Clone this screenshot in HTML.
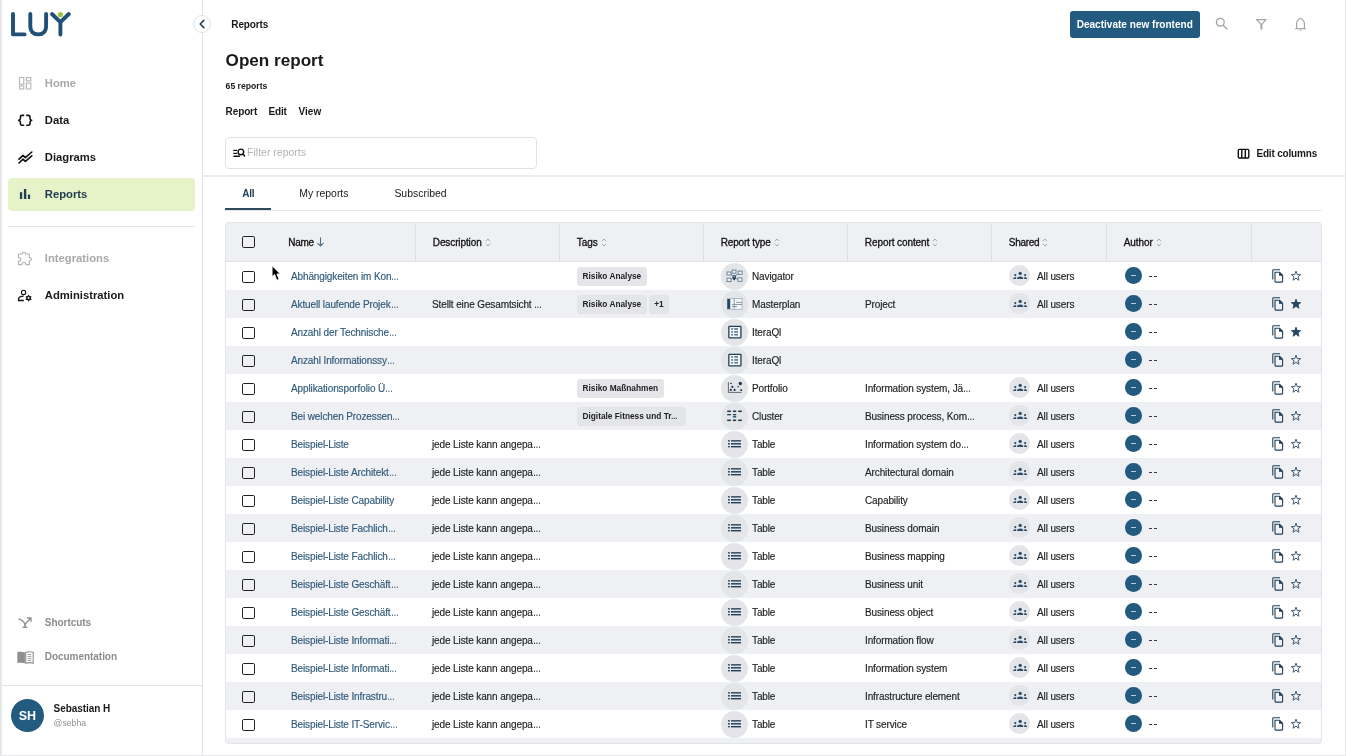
<!DOCTYPE html>
<html><head><meta charset="utf-8">
<style>
*{box-sizing:border-box;margin:0;padding:0}
html,body{width:1346px;height:756px;overflow:hidden;background:#fff;font-family:"Liberation Sans",sans-serif;color:#1a1a1a}
.abs{position:absolute}
#lb{position:absolute;left:0;top:0;width:2px;height:756px;background:#e6e7eb}
#rb{position:absolute;left:1345px;top:0;width:1px;height:756px;background:#e6e7eb}
#bb{position:absolute;left:0;top:755px;width:1346px;height:1px;background:#e6e7eb}
#side{position:absolute;left:2px;top:0;width:201px;height:755px;border-right:1px solid #e3e4e9}
.nav{position:absolute;left:43px;font-weight:bold;font-size:11.25px;line-height:14px;white-space:nowrap}
.nav.gray{color:#a9a9a9}
.navi{position:absolute}
#active{position:absolute;left:6px;top:178px;width:187px;height:33px;background:#e6f2c7;border-radius:4px}
.hr{position:absolute;height:1px;background:#e3e4e9}
.t{position:absolute;top:0.6px;height:28px;line-height:28px;font-size:10px;letter-spacing:-0.12px;white-space:nowrap;color:#222;-webkit-text-stroke-width:0.15px}
.el{display:inline-block;transform:scaleX(.78);transform-origin:0 50%}
.link{color:#2f5a7a}
.row{position:absolute;left:0;width:1097px;height:28px}
.cb{position:absolute;width:12.5px;height:12.2px;border:1.7px solid #222;border-radius:1.8px}
.tags{position:absolute;left:351.5px;top:4.8px;display:flex;gap:2px}
.tag{height:19px;line-height:19px;padding:0 6px;background:#e4e5e8;border-radius:3px;font-size:8.3px;font-weight:bold;color:#222;white-space:nowrap}
.ic{position:absolute;top:0.5px;width:27px;height:27px;border-radius:50%;background:#e3e5e9}
.ic svg{position:absolute;left:4.5px;top:5.5px}
.ics{position:absolute;top:2.8px;width:21.5px;height:21.5px;border-radius:50%;background:#e3e5e9}
.ics svg{display:block}
.dsh{position:absolute;top:13.6px;width:3px;height:1.4px;background:#3a3a3a}
.av{position:absolute;top:5.2px;width:16.6px;height:16.6px;border-radius:50%;background:#225a80}
.av i{position:absolute;left:5.8px;top:7.6px;width:5px;height:1.4px;background:#b9cbd8}
.dash{letter-spacing:0.5px;color:#333}
.copy{position:absolute;top:7px;width:12px;height:14px}
.copy svg,.star svg{display:block}
.star{position:absolute;top:8px}
.hd{position:absolute;top:15px;font-size:10px;white-space:nowrap;line-height:12px;color:#111;-webkit-text-stroke:0.3px #111}
.hd svg{vertical-align:-1px;margin-left:3px}
.colb{position:absolute;top:0;width:1px;height:40px;background:#dfe1e5}
</style></head><body>
<div id="wrap" style="position:absolute;left:0;top:0;width:1346px;height:756px;will-change:transform;overflow:hidden">
<div id="lb"></div><div id="rb"></div><div id="bb"></div>

<!-- SIDEBAR -->
<div id="side">
  <svg class="abs" style="left:9px;top:11px" width="62" height="27" viewBox="0 0 62 27">
    <g fill="none" stroke="#1f5178" stroke-width="3.9" stroke-linecap="round" stroke-linejoin="round">
      <path d="M2 2.9V23.4H13.6"/>
      <path d="M19.3 2.9V15C19.3 20.5 22.5 23.4 27.2 23.4C31.9 23.4 35.1 20.5 35.1 15V2.9"/>
      <path d="M41 3L49.4 11.2L57.8 3M49.4 11.2V23.5"/>
    </g>
    <circle cx="49.4" cy="3.6" r="2.6" fill="#9ac43c"/>
  </svg>
  <div id="active"></div>
<svg class="abs" style="left:14.6px;top:76px" width="15" height="15" viewBox="0 0 15 15" fill="none" stroke="#b8b8b8" stroke-width="1.15"><rect x="2.5" y="1.5" width="4.3" height="6.8"/><rect x="9.4" y="1.5" width="4.4" height="3.3"/><rect x="2.5" y="10" width="4.3" height="3"/><rect x="9.4" y="7" width="4.4" height="6"/></svg>
<div class="nav gray" style="left:42.8px;top:76.30px;font-size:11.25px;line-height:14px">Home</div>
<svg class="abs" style="left:16px;top:114px" width="15" height="13" viewBox="0 0 15 13" fill="none" stroke="#111" stroke-width="1.6" stroke-linecap="round" stroke-linejoin="round"><path d="M5.6 1.4H4C3 1.4 2.4 1.9 2.4 2.9V4.4C2.4 5.3 1.6 6 0.7 6.3C1.6 6.6 2.4 7.3 2.4 8.2V9.8C2.4 10.8 3 11.3 4 11.3H5.6"/><path d="M8.8 1.4H10.4C11.4 1.4 12 1.9 12 2.9V4.4C12 5.3 12.8 6 13.7 6.3C12.8 6.6 12 7.3 12 8.2V9.8C12 10.8 11.4 11.3 10.4 11.3H8.8"/></svg>
<div class="nav" style="left:42.8px;top:112.90px;font-size:11.25px;line-height:14px">Data</div>
<svg class="abs" style="left:15.5px;top:150.5px" width="15" height="13" viewBox="0 0 15 13" fill="none" stroke="#111" stroke-width="1.6" stroke-linecap="round" stroke-linejoin="round"><path d="M1 8.2L5 4.4L7.4 6.6L13.8 1"/><path d="M1 12L5 8.2L7.4 10.4L13.8 4.8"/></svg>
<div class="nav" style="left:42.8px;top:150.10px;font-size:11.25px;line-height:14px">Diagrams</div>
<svg class="abs" style="left:15px;top:188px" width="15" height="12" viewBox="0 0 15 12" fill="#203f57"><rect x="2.9" y="4.2" width="2.3" height="6.8"/><rect x="6.9" y="1" width="2.4" height="10"/><rect x="10.9" y="6.6" width="2.2" height="4.4"/></svg>
<div class="nav" style="left:42.8px;top:187.10px;font-size:11.25px;line-height:14px;color:#1f3b52">Reports</div>
<div class="hr" style="left:6px;top:226px;width:187px"></div>
<svg class="abs" style="left:14px;top:250px" width="17" height="17" viewBox="0 0 17 17" fill="none" stroke="#b4b4b4" stroke-width="1.1" stroke-linejoin="round"><path d="M2.5 4H6.3C6.2 2.9 6.8 2.2 7.9 2.2C9 2.2 9.6 2.9 9.5 4H13.4V7.6C14.5 7.5 15.4 8.2 15.4 9.2C15.4 10.2 14.5 10.9 13.4 10.8V14.6H9.8C9.9 13.4 9.1 12.2 7.9 12.2C6.7 12.2 5.9 13.4 6 14.6H2.5V11.2C3.9 11.3 4.9 10.6 4.9 9.4C4.9 8.2 3.9 7.5 2.5 7.6Z"/></svg>
<div class="nav gray" style="left:42.8px;top:251.40px;font-size:11.25px;line-height:14px">Integrations</div>
<svg class="abs" style="left:13px;top:286px" width="20" height="18" viewBox="0 0 20 18" fill="none" stroke="#111"><circle cx="8.57" cy="6.4" r="2.15" stroke-width="1.15"/><path d="M8.6 10.2C6 10.3 4 11 3.6 12.6V14.5H8.8" stroke-width="1.35"/><polygon points="13.57,8.55 14.70,10.15 16.64,10.32 15.82,12.10 16.64,13.88 14.70,14.05 13.57,15.65 12.45,14.05 10.50,13.88 11.32,12.10 10.50,10.32 12.45,10.15" fill="#111" stroke="none"/><circle cx="13.57" cy="12.1" r="1" fill="#fff" stroke="none"/></svg>
<div class="nav" style="left:42.8px;top:288.20px;font-size:11.25px;line-height:14px">Administration</div>
<svg class="abs" style="left:15.5px;top:617px" width="15" height="12" viewBox="0 0 15 12" fill="none" stroke="#8f8f8f" stroke-width="1.3" stroke-linecap="round"><path d="M1 2.2C3.5 2.4 5.5 4.4 7 7.2"/><path d="M7 7.2L13 1M9.6 1H13V4.4"/><path d="M7 7.4V9.9M5.2 10.2H8.8" stroke-width="1.5"/></svg>
<div class="nav gray" style="left:42.8px;top:615.53px;font-size:10px;line-height:14px;letter-spacing:-0.04px;color:#8c8c8c">Shortcuts</div>
<svg class="abs" style="left:15px;top:650.5px" width="17" height="13" viewBox="0 0 17 13"><path d="M0.3 1.3C2.8 0.6 5.4 0.7 7.9 1.5V12.3C5.4 11.5 2.8 11.4 0.3 12.1Z" fill="#8f8f8f"/><path d="M8.7 1.5C11.2 0.7 13.8 0.6 16.2 1.3V12.1C13.8 11.4 11.2 11.5 8.7 12.3Z" fill="none" stroke="#8f8f8f" stroke-width="1.1"/><path d="M10.6 3.6H14.4M10.6 5.6H14.4M10.6 7.6H14.4M10.6 9.6H14.4" stroke="#8f8f8f" stroke-width="0.85"/></svg>
<div class="nav gray" style="left:42.8px;top:649.93px;font-size:10px;line-height:14px;letter-spacing:-0.045px;color:#8c8c8c">Documentation</div>
<div class="hr" style="left:0;top:685px;width:201px"></div>
<div class="abs" style="left:8.8px;top:699px;width:33.2px;height:33.2px;border-radius:50%;background:#225a80;color:#fff;font-weight:bold;font-size:12.5px;line-height:35.2px;text-align:center;letter-spacing:0px">SH</div>
<div class="nav" style="left:51.6px;top:702.93px;font-size:10px;line-height:12px;letter-spacing:-0.06px;color:#1a1a1a">Sebastian H</div>
<div class="abs" style="left:51.6px;top:717.2px;font-size:8.7px;line-height:12px;color:#8e8e8e;white-space:nowrap">@sebha</div>
</div>

<div class="abs" style="left:193px;top:15px;width:18.4px;height:18.4px;border-radius:50%;background:#fff;border:1px solid #dfe1e5"></div>
<svg class="abs" style="left:198px;top:19px" width="8" height="10" viewBox="0 0 8 10" fill="none" stroke="#1d3a50" stroke-width="1.5" stroke-linecap="round" stroke-linejoin="round"><path d="M5.8 1.4L2.2 5L5.8 8.6"/></svg>
<div class="abs" style="left:231.3px;top:18.34px;font-size:10px;line-height:14px;font-weight:bold;color:#1a1a1a;white-space:nowrap;letter-spacing:-0.14px;">Reports</div>
<div class="abs" style="left:1070px;top:10.5px;width:129.5px;height:27.7px;border-radius:3px;background:#225a80;color:#fff;font-weight:bold;font-size:10.05px;line-height:27.7px;text-align:center;white-space:nowrap">Deactivate new frontend</div>
<svg class="abs" style="left:1214px;top:17px" width="15" height="14" viewBox="0 0 15 14" fill="none" stroke="#a3a3a3" stroke-width="1.3" stroke-linecap="round"><circle cx="6.3" cy="5.3" r="3.9"/><path d="M9.2 8.2L13 12"/></svg>
<svg class="abs" style="left:1255px;top:18px" width="13" height="13" viewBox="0 0 13 13" fill="none" stroke="#a3a3a3" stroke-width="1.2" stroke-linejoin="round"><path d="M1.6 1.6H11.2L6.4 6.6Z"/><path d="M6.4 6.2V11.6" stroke-width="1.9"/></svg>
<svg class="abs" style="left:1294px;top:17px" width="13" height="15" viewBox="0 0 13 15" fill="none" stroke="#a3a3a3" stroke-width="1.2" stroke-linejoin="round"><path d="M6.5 1.3C4 2.6 2.6 4.2 2.6 7V11.6M6.5 1.3C9 2.6 10.4 4.2 10.4 7V11.6"/><path d="M1.2 11.7H11.8"/><path d="M5.6 13.3H7.4" stroke-width="0.9"/></svg>
<div class="abs" style="left:225.6px;top:50.87px;font-size:17.1px;line-height:20px;font-weight:bold;color:#1a1a1a;white-space:nowrap;">Open report</div>
<div class="abs" style="left:225.6px;top:80.00px;font-size:8.65px;line-height:12px;font-weight:bold;color:#1a1a1a;white-space:nowrap;">65 reports</div>
<div class="abs" style="left:225.6px;top:104.53px;font-size:10px;line-height:14px;font-weight:bold;color:#1a1a1a;white-space:nowrap;letter-spacing:-0.12px;">Report</div>
<div class="abs" style="left:268.6px;top:104.53px;font-size:10px;line-height:14px;font-weight:bold;color:#1a1a1a;white-space:nowrap;letter-spacing:-0.2px;">Edit</div>
<div class="abs" style="left:298.4px;top:104.53px;font-size:10px;line-height:14px;font-weight:bold;color:#1a1a1a;white-space:nowrap;letter-spacing:0.1px;">View</div>
<div class="abs" style="left:225px;top:137px;width:312px;height:31.5px;border:1px solid #dfe2e6;border-radius:4px;background:#fff"></div>
<svg class="abs" style="left:232px;top:147px" width="14" height="11" viewBox="0 0 14 11" fill="none" stroke="#111" stroke-width="1.4" stroke-linecap="round"><path d="M1.9 3.4H4.6M1.9 6.4H4.6M1.9 9.2H7.5"/><circle cx="8.9" cy="4.9" r="2.8"/><path d="M11 7L12.6 9"/></svg>
<div class="abs" style="left:247.1px;top:145.36px;font-size:10.5px;line-height:14px;color:#b3b3b3;white-space:nowrap;">Filter reports</div>
<svg class="abs" style="left:1237px;top:147.5px" width="13" height="11" viewBox="0 0 13 11" fill="none" stroke="#111" stroke-width="1.4"><rect x="1.3" y="1.4" width="10.5" height="8.6" rx="1"/><path d="M4.8 1.4V10M8.3 1.4V10"/></svg>
<div class="abs" style="left:1256.4px;top:146.53px;font-size:10px;line-height:14px;font-weight:bold;color:#1a1a1a;white-space:nowrap;letter-spacing:-0.18px;">Edit columns</div>
<div class="hr" style="left:203px;top:175px;width:1142px;height:2px;background:#ebecef"></div>
<div class="abs" style="left:242.2px;top:186.53px;font-size:10px;line-height:14px;font-weight:bold;color:#22405a;white-space:nowrap;letter-spacing:-0.19px;">All</div>
<div class="abs" style="left:299.2px;top:187.08px;font-size:10.45px;line-height:14px;color:#1a1a1a;white-space:nowrap;">My reports</div>
<div class="abs" style="left:394.4px;top:187.08px;font-size:10.45px;line-height:14px;color:#1a1a1a;white-space:nowrap;">Subscribed</div>
<div class="hr" style="left:225px;top:210px;width:1097px;background:#e6e7eb"></div>
<div class="abs" style="left:225px;top:208px;width:46px;height:2px;background:#2d4a61"></div>

<!-- TABLE -->
<div id="table" style="position:absolute;left:225px;top:222px;width:1097px;height:522px;border-radius:4px;overflow:hidden;background:#fff">
  <div style="position:absolute;left:0;top:0;width:1097px;height:40px;background:#eef0f4;border-bottom:1px solid #dfe1e5"></div>
  <div class="cb" style="left:17.4px;top:13.7px"></div>
<div class="hd" style="left:63.3px;top:14.54px;letter-spacing:-0.29px"><span>Name</span><svg width="7" height="10" viewBox="0 0 7 10" fill="none" stroke="#4a6c86" stroke-width="1.1" stroke-linecap="round"><path d="M3.5 0.8V9M0.8 6.3L3.5 9L6.2 6.3"/></svg></div>
<div class="hd" style="left:207.8px;top:14.54px;letter-spacing:-0.11px"><span>Description</span><svg width="6" height="9" viewBox="0 0 6 9" fill="none" stroke="#9aa0a8" stroke-width="0.9"><path d="M1 3.2 L3 1 L5 3.2 M1 5.8 L3 8 L5 5.8"/></svg></div>
<div class="hd" style="left:351.8px;top:14.54px;letter-spacing:-0.03px"><span>Tags</span><svg width="6" height="9" viewBox="0 0 6 9" fill="none" stroke="#9aa0a8" stroke-width="0.9"><path d="M1 3.2 L3 1 L5 3.2 M1 5.8 L3 8 L5 5.8"/></svg></div>
<div class="hd" style="left:495.7px;top:14.54px;letter-spacing:-0.16px"><span>Report type</span><svg width="6" height="9" viewBox="0 0 6 9" fill="none" stroke="#9aa0a8" stroke-width="0.9"><path d="M1 3.2 L3 1 L5 3.2 M1 5.8 L3 8 L5 5.8"/></svg></div>
<div class="hd" style="left:639.8px;top:14.54px;letter-spacing:-0.08px"><span>Report content</span><svg width="6" height="9" viewBox="0 0 6 9" fill="none" stroke="#9aa0a8" stroke-width="0.9"><path d="M1 3.2 L3 1 L5 3.2 M1 5.8 L3 8 L5 5.8"/></svg></div>
<div class="hd" style="left:783.8px;top:14.54px;letter-spacing:-0.3px"><span>Shared</span><svg width="6" height="9" viewBox="0 0 6 9" fill="none" stroke="#9aa0a8" stroke-width="0.9"><path d="M1 3.2 L3 1 L5 3.2 M1 5.8 L3 8 L5 5.8"/></svg></div>
<div class="hd" style="left:898.7px;top:14.54px;letter-spacing:-0.04px"><span>Author</span><svg width="6" height="9" viewBox="0 0 6 9" fill="none" stroke="#9aa0a8" stroke-width="0.9"><path d="M1 3.2 L3 1 L5 3.2 M1 5.8 L3 8 L5 5.8"/></svg></div>
<div class="colb" style="left:190.0px"></div>
<div class="colb" style="left:334.0px"></div>
<div class="colb" style="left:478.0px"></div>
<div class="colb" style="left:622.0px"></div>
<div class="colb" style="left:766.0px"></div>
<div class="colb" style="left:881.0px"></div>
<div class="colb" style="left:1026.0px"></div>
  <div class="row" style="top:40px;background:#ffffff"><div class="cb" style="left:17.4px;top:8.7px"></div><div class="t link" style="left:66px">Abhängigkeiten im Kon<span class="el">…</span></div><div class="tags"><div class="tag">Risiko Analyse</div></div><div class="ic" style="left:495.5px"><svg width="18" height="16" viewBox="0 0 18 16" fill="#f3f6f9" stroke="#5f7b90" stroke-width="0.9"><path d="M6 6.4L7.6 7.6M13.2 6.1L10.6 7.6M6 11.6L7.6 10.4M13 11.3L10.6 10.4" fill="none"/><rect x="7.1" y="2.1" width="3.9" height="3.1" rx="0"/><rect x="2" y="4" width="4" height="3" rx="0"/><rect x="13.2" y="3.1" width="3.9" height="3.2" rx="0"/><rect x="2" y="10.2" width="4" height="3.4" rx="0"/><rect x="13" y="9.9" width="4" height="3.4" rx="0"/><path d="M9.2 12.6C7.8 10.9 7.3 10 7.3 8.9A1.9 1.9 0 0 1 11.1 8.9C11.1 10 10.6 10.9 9.2 12.6Z" fill="#22425a" stroke="none"/><circle cx="9.2" cy="8.8" r="0.7" fill="#dfe6ec" stroke="none"/></svg></div><div class="t" style="left:527px">Navigator</div><div class="ics" style="left:783.8px"><div style="position:absolute;left:4.2px;top:6.2px;width:15px;height:9px"><svg width="15" height="9" viewBox="0 0 15 9" fill="#2b4e6a"><circle cx="7.2" cy="2.4" r="1.65"/><path d="M4 7.9C4.1 6.2 5.3 5.4 7.2 5.4C9.1 5.4 10.3 6.2 10.4 7.9Z"/><circle cx="2.3" cy="4.1" r="1.1"/><path d="M0.2 7.9C0.3 6.8 1 6.3 2.3 6.3C2.8 6.3 3.2 6.4 3.5 6.6C3.2 7 3.1 7.4 3.1 7.9Z"/><circle cx="12.1" cy="4.1" r="1.1"/><path d="M14.2 7.9C14.1 6.8 13.4 6.3 12.1 6.3C11.6 6.3 11.2 6.4 10.9 6.6C11.2 7 11.3 7.4 11.3 7.9Z"/></svg></div></div><div class="t" style="left:812px">All users</div><div class="av" style="left:900px"><i></i></div><div class="dsh" style="left:924px"></div><div class="dsh" style="left:929px"></div><div class="copy" style="left:1047px"><svg width="12" height="14" viewBox="0 0 12 14" fill="none" stroke="#22405a" stroke-width="1.1"><path d="M0.8 10.5V1.3C0.8 1 1 0.8 1.3 0.8H8"/><path d="M3 3.2H7.6L10.6 6.2V12.6C10.6 12.9 10.4 13.1 10.1 13.1H3.5C3.2 13.1 3 12.9 3 12.6Z"/><path d="M7.6 3.2V6.2H10.6" fill="#22405a"/></svg></div><div class="star" style="left:1065px"><svg width="12" height="12" viewBox="0 0 24 24" fill="none" stroke="#22405a" stroke-width="1.7" stroke-linejoin="miter"><path d="M12 2.4 L14.5 9.1 L21.4 9.3 L16 13.6 L17.9 20.5 L12 16.5 L6.1 20.5 L8 13.6 L2.6 9.3 L9.5 9.1 Z"/></svg></div></div>
<div class="row" style="top:68px;background:#eef0f4"><div class="cb" style="left:17.4px;top:8.7px"></div><div class="t link" style="left:66px">Aktuell laufende Projek<span class="el">…</span></div><div class="t" style="left:207px">Stellt eine Gesamtsicht <span class="el">…</span></div><div class="tags"><div class="tag">Risiko Analyse</div><div class="tag" style="padding:0 5px">+1</div></div><div class="ic" style="left:495.5px"><svg width="18" height="16" viewBox="0 0 18 16"><rect x="2.4" y="2.4" width="14.6" height="10.9" fill="#f4f7fa" stroke="#a3b0ba" stroke-width="0.8"/><rect x="2.3" y="3" width="2.9" height="9.9" fill="#1d4764"/><g stroke="#7f93a3" stroke-width="0.9"><path d="M9.2 2.8V13.2M11 6.4H17M7 8.5H17M7 10.5H12"/></g></svg></div><div class="t" style="left:527px">Masterplan</div><div class="t" style="left:640px">Project</div><div class="ics" style="left:783.8px"><div style="position:absolute;left:4.2px;top:6.2px;width:15px;height:9px"><svg width="15" height="9" viewBox="0 0 15 9" fill="#2b4e6a"><circle cx="7.2" cy="2.4" r="1.65"/><path d="M4 7.9C4.1 6.2 5.3 5.4 7.2 5.4C9.1 5.4 10.3 6.2 10.4 7.9Z"/><circle cx="2.3" cy="4.1" r="1.1"/><path d="M0.2 7.9C0.3 6.8 1 6.3 2.3 6.3C2.8 6.3 3.2 6.4 3.5 6.6C3.2 7 3.1 7.4 3.1 7.9Z"/><circle cx="12.1" cy="4.1" r="1.1"/><path d="M14.2 7.9C14.1 6.8 13.4 6.3 12.1 6.3C11.6 6.3 11.2 6.4 10.9 6.6C11.2 7 11.3 7.4 11.3 7.9Z"/></svg></div></div><div class="t" style="left:812px">All users</div><div class="av" style="left:900px"><i></i></div><div class="dsh" style="left:924px"></div><div class="dsh" style="left:929px"></div><div class="copy" style="left:1047px"><svg width="12" height="14" viewBox="0 0 12 14" fill="none" stroke="#22405a" stroke-width="1.1"><path d="M0.8 10.5V1.3C0.8 1 1 0.8 1.3 0.8H8"/><path d="M3 3.2H7.6L10.6 6.2V12.6C10.6 12.9 10.4 13.1 10.1 13.1H3.5C3.2 13.1 3 12.9 3 12.6Z"/><path d="M7.6 3.2V6.2H10.6" fill="#22405a"/></svg></div><div class="star" style="left:1065px"><svg width="12" height="12" viewBox="0 0 24 24" fill="#1f4a6a" stroke="#22405a" stroke-width="1.7" stroke-linejoin="miter"><path d="M12 2.4 L14.5 9.1 L21.4 9.3 L16 13.6 L17.9 20.5 L12 16.5 L6.1 20.5 L8 13.6 L2.6 9.3 L9.5 9.1 Z"/></svg></div></div>
<div class="row" style="top:96px;background:#ffffff"><div class="cb" style="left:17.4px;top:8.7px"></div><div class="t link" style="left:66px">Anzahl der Technische<span class="el">…</span></div><div class="ic" style="left:495.5px"><svg width="18" height="16" viewBox="0 0 18 16"><rect x="3.85" y="2.45" width="12.1" height="11.5" rx="0.6" fill="#f5f8fb" stroke="#213f56" stroke-width="1.3"/><g fill="#34556d"><rect x="6.2" y="4.3" width="1.8" height="1.3"/><rect x="9.2" y="4.3" width="3.8" height="1.3"/><rect x="6.2" y="7.3" width="1.8" height="1.3"/><rect x="9.2" y="7.3" width="3.8" height="1.3"/><rect x="6.2" y="10.2" width="1.8" height="1.2"/><rect x="9.2" y="10.2" width="3.8" height="1.2"/></g></svg></div><div class="t" style="left:527px">IteraQl</div><div class="av" style="left:900px"><i></i></div><div class="dsh" style="left:924px"></div><div class="dsh" style="left:929px"></div><div class="copy" style="left:1047px"><svg width="12" height="14" viewBox="0 0 12 14" fill="none" stroke="#22405a" stroke-width="1.1"><path d="M0.8 10.5V1.3C0.8 1 1 0.8 1.3 0.8H8"/><path d="M3 3.2H7.6L10.6 6.2V12.6C10.6 12.9 10.4 13.1 10.1 13.1H3.5C3.2 13.1 3 12.9 3 12.6Z"/><path d="M7.6 3.2V6.2H10.6" fill="#22405a"/></svg></div><div class="star" style="left:1065px"><svg width="12" height="12" viewBox="0 0 24 24" fill="#1f4a6a" stroke="#22405a" stroke-width="1.7" stroke-linejoin="miter"><path d="M12 2.4 L14.5 9.1 L21.4 9.3 L16 13.6 L17.9 20.5 L12 16.5 L6.1 20.5 L8 13.6 L2.6 9.3 L9.5 9.1 Z"/></svg></div></div>
<div class="row" style="top:124px;background:#eef0f4"><div class="cb" style="left:17.4px;top:8.7px"></div><div class="t link" style="left:66px">Anzahl Informationssy<span class="el">…</span></div><div class="ic" style="left:495.5px"><svg width="18" height="16" viewBox="0 0 18 16"><rect x="3.85" y="2.45" width="12.1" height="11.5" rx="0.6" fill="#f5f8fb" stroke="#213f56" stroke-width="1.3"/><g fill="#34556d"><rect x="6.2" y="4.3" width="1.8" height="1.3"/><rect x="9.2" y="4.3" width="3.8" height="1.3"/><rect x="6.2" y="7.3" width="1.8" height="1.3"/><rect x="9.2" y="7.3" width="3.8" height="1.3"/><rect x="6.2" y="10.2" width="1.8" height="1.2"/><rect x="9.2" y="10.2" width="3.8" height="1.2"/></g></svg></div><div class="t" style="left:527px">IteraQl</div><div class="av" style="left:900px"><i></i></div><div class="dsh" style="left:924px"></div><div class="dsh" style="left:929px"></div><div class="copy" style="left:1047px"><svg width="12" height="14" viewBox="0 0 12 14" fill="none" stroke="#22405a" stroke-width="1.1"><path d="M0.8 10.5V1.3C0.8 1 1 0.8 1.3 0.8H8"/><path d="M3 3.2H7.6L10.6 6.2V12.6C10.6 12.9 10.4 13.1 10.1 13.1H3.5C3.2 13.1 3 12.9 3 12.6Z"/><path d="M7.6 3.2V6.2H10.6" fill="#22405a"/></svg></div><div class="star" style="left:1065px"><svg width="12" height="12" viewBox="0 0 24 24" fill="none" stroke="#22405a" stroke-width="1.7" stroke-linejoin="miter"><path d="M12 2.4 L14.5 9.1 L21.4 9.3 L16 13.6 L17.9 20.5 L12 16.5 L6.1 20.5 L8 13.6 L2.6 9.3 L9.5 9.1 Z"/></svg></div></div>
<div class="row" style="top:152px;background:#ffffff"><div class="cb" style="left:17.4px;top:8.7px"></div><div class="t link" style="left:66px">Applikationsporfolio Ü<span class="el">…</span></div><div class="tags"><div class="tag">Risiko Maßnahmen</div></div><div class="ic" style="left:495.5px"><svg width="18" height="16" viewBox="0 0 18 16" fill="#1b3142"><path d="M3.4 2.1V12.4H16.6" fill="none" stroke="#50606c" stroke-width="0.9"/><rect x="5" y="2.9" width="2" height="0.9"/><circle cx="7.4" cy="6.9" r="1.05"/><circle cx="5.8" cy="9.9" r="1.05"/><circle cx="9.6" cy="9.9" r="1.05"/><circle cx="13.2" cy="6.7" r="0.8"/><circle cx="15.3" cy="3.5" r="1.65"/><rect x="15.3" y="9.2" width="1.8" height="1.8" rx="0.4"/></svg></div><div class="t" style="left:527px">Portfolio</div><div class="t" style="left:640px">Information system, Jä<span class="el">…</span></div><div class="ics" style="left:783.8px"><div style="position:absolute;left:4.2px;top:6.2px;width:15px;height:9px"><svg width="15" height="9" viewBox="0 0 15 9" fill="#2b4e6a"><circle cx="7.2" cy="2.4" r="1.65"/><path d="M4 7.9C4.1 6.2 5.3 5.4 7.2 5.4C9.1 5.4 10.3 6.2 10.4 7.9Z"/><circle cx="2.3" cy="4.1" r="1.1"/><path d="M0.2 7.9C0.3 6.8 1 6.3 2.3 6.3C2.8 6.3 3.2 6.4 3.5 6.6C3.2 7 3.1 7.4 3.1 7.9Z"/><circle cx="12.1" cy="4.1" r="1.1"/><path d="M14.2 7.9C14.1 6.8 13.4 6.3 12.1 6.3C11.6 6.3 11.2 6.4 10.9 6.6C11.2 7 11.3 7.4 11.3 7.9Z"/></svg></div></div><div class="t" style="left:812px">All users</div><div class="av" style="left:900px"><i></i></div><div class="dsh" style="left:924px"></div><div class="dsh" style="left:929px"></div><div class="copy" style="left:1047px"><svg width="12" height="14" viewBox="0 0 12 14" fill="none" stroke="#22405a" stroke-width="1.1"><path d="M0.8 10.5V1.3C0.8 1 1 0.8 1.3 0.8H8"/><path d="M3 3.2H7.6L10.6 6.2V12.6C10.6 12.9 10.4 13.1 10.1 13.1H3.5C3.2 13.1 3 12.9 3 12.6Z"/><path d="M7.6 3.2V6.2H10.6" fill="#22405a"/></svg></div><div class="star" style="left:1065px"><svg width="12" height="12" viewBox="0 0 24 24" fill="none" stroke="#22405a" stroke-width="1.7" stroke-linejoin="miter"><path d="M12 2.4 L14.5 9.1 L21.4 9.3 L16 13.6 L17.9 20.5 L12 16.5 L6.1 20.5 L8 13.6 L2.6 9.3 L9.5 9.1 Z"/></svg></div></div>
<div class="row" style="top:180px;background:#eef0f4"><div class="cb" style="left:17.4px;top:8.7px"></div><div class="t link" style="left:66px">Bei welchen Prozessen<span class="el">…</span></div><div class="tags"><div class="tag">Digitale Fitness und Tr<span class="el">…</span></div></div><div class="ic" style="left:495.5px"><svg width="18" height="16" viewBox="0 0 18 16" fill="#223f55"><rect x="2.2" y="2.5" width="3.7" height="1.6"/><rect x="7.9" y="2.5" width="3.3" height="1.6"/><rect x="13.2" y="2.5" width="3.6" height="1.6"/><rect x="2.2" y="6" width="3.7" height="1.3"/><rect x="7.9" y="6" width="3.3" height="1.3"/><rect x="7.9" y="7.9" width="3.3" height="1.7" fill="#35607f"/><rect x="2.2" y="11.5" width="3.7" height="1.6"/><rect x="7.9" y="11.5" width="3.3" height="1.6"/><rect x="13.2" y="11.5" width="3.6" height="1.6"/></svg></div><div class="t" style="left:527px">Cluster</div><div class="t" style="left:640px">Business process, Kom<span class="el">…</span></div><div class="ics" style="left:783.8px"><div style="position:absolute;left:4.2px;top:6.2px;width:15px;height:9px"><svg width="15" height="9" viewBox="0 0 15 9" fill="#2b4e6a"><circle cx="7.2" cy="2.4" r="1.65"/><path d="M4 7.9C4.1 6.2 5.3 5.4 7.2 5.4C9.1 5.4 10.3 6.2 10.4 7.9Z"/><circle cx="2.3" cy="4.1" r="1.1"/><path d="M0.2 7.9C0.3 6.8 1 6.3 2.3 6.3C2.8 6.3 3.2 6.4 3.5 6.6C3.2 7 3.1 7.4 3.1 7.9Z"/><circle cx="12.1" cy="4.1" r="1.1"/><path d="M14.2 7.9C14.1 6.8 13.4 6.3 12.1 6.3C11.6 6.3 11.2 6.4 10.9 6.6C11.2 7 11.3 7.4 11.3 7.9Z"/></svg></div></div><div class="t" style="left:812px">All users</div><div class="av" style="left:900px"><i></i></div><div class="dsh" style="left:924px"></div><div class="dsh" style="left:929px"></div><div class="copy" style="left:1047px"><svg width="12" height="14" viewBox="0 0 12 14" fill="none" stroke="#22405a" stroke-width="1.1"><path d="M0.8 10.5V1.3C0.8 1 1 0.8 1.3 0.8H8"/><path d="M3 3.2H7.6L10.6 6.2V12.6C10.6 12.9 10.4 13.1 10.1 13.1H3.5C3.2 13.1 3 12.9 3 12.6Z"/><path d="M7.6 3.2V6.2H10.6" fill="#22405a"/></svg></div><div class="star" style="left:1065px"><svg width="12" height="12" viewBox="0 0 24 24" fill="none" stroke="#22405a" stroke-width="1.7" stroke-linejoin="miter"><path d="M12 2.4 L14.5 9.1 L21.4 9.3 L16 13.6 L17.9 20.5 L12 16.5 L6.1 20.5 L8 13.6 L2.6 9.3 L9.5 9.1 Z"/></svg></div></div>
<div class="row" style="top:208px;background:#ffffff"><div class="cb" style="left:17.4px;top:8.7px"></div><div class="t link" style="left:66px">Beispiel-Liste</div><div class="t" style="left:207px">jede Liste kann angepa<span class="el">…</span></div><div class="ic" style="left:495.5px"><svg width="18" height="16" viewBox="0 0 18 16" fill="#223f55"><rect x="3.1" y="4.1" width="1.7" height="1.5"/><rect x="6" y="4.1" width="10" height="1.5" fill="#2c4e67"/><rect x="3.1" y="7" width="1.7" height="1.6"/><rect x="6" y="7" width="10" height="1.6" fill="#2c4e67"/><rect x="3.1" y="10" width="1.7" height="1.4"/><rect x="6" y="10" width="10" height="1.4"/></svg></div><div class="t" style="left:527px">Table</div><div class="t" style="left:640px">Information system do<span class="el">…</span></div><div class="ics" style="left:783.8px"><div style="position:absolute;left:4.2px;top:6.2px;width:15px;height:9px"><svg width="15" height="9" viewBox="0 0 15 9" fill="#2b4e6a"><circle cx="7.2" cy="2.4" r="1.65"/><path d="M4 7.9C4.1 6.2 5.3 5.4 7.2 5.4C9.1 5.4 10.3 6.2 10.4 7.9Z"/><circle cx="2.3" cy="4.1" r="1.1"/><path d="M0.2 7.9C0.3 6.8 1 6.3 2.3 6.3C2.8 6.3 3.2 6.4 3.5 6.6C3.2 7 3.1 7.4 3.1 7.9Z"/><circle cx="12.1" cy="4.1" r="1.1"/><path d="M14.2 7.9C14.1 6.8 13.4 6.3 12.1 6.3C11.6 6.3 11.2 6.4 10.9 6.6C11.2 7 11.3 7.4 11.3 7.9Z"/></svg></div></div><div class="t" style="left:812px">All users</div><div class="av" style="left:900px"><i></i></div><div class="dsh" style="left:924px"></div><div class="dsh" style="left:929px"></div><div class="copy" style="left:1047px"><svg width="12" height="14" viewBox="0 0 12 14" fill="none" stroke="#22405a" stroke-width="1.1"><path d="M0.8 10.5V1.3C0.8 1 1 0.8 1.3 0.8H8"/><path d="M3 3.2H7.6L10.6 6.2V12.6C10.6 12.9 10.4 13.1 10.1 13.1H3.5C3.2 13.1 3 12.9 3 12.6Z"/><path d="M7.6 3.2V6.2H10.6" fill="#22405a"/></svg></div><div class="star" style="left:1065px"><svg width="12" height="12" viewBox="0 0 24 24" fill="none" stroke="#22405a" stroke-width="1.7" stroke-linejoin="miter"><path d="M12 2.4 L14.5 9.1 L21.4 9.3 L16 13.6 L17.9 20.5 L12 16.5 L6.1 20.5 L8 13.6 L2.6 9.3 L9.5 9.1 Z"/></svg></div></div>
<div class="row" style="top:236px;background:#eef0f4"><div class="cb" style="left:17.4px;top:8.7px"></div><div class="t link" style="left:66px">Beispiel-Liste Architekt<span class="el">…</span></div><div class="t" style="left:207px">jede Liste kann angepa<span class="el">…</span></div><div class="ic" style="left:495.5px"><svg width="18" height="16" viewBox="0 0 18 16" fill="#223f55"><rect x="3.1" y="4.1" width="1.7" height="1.5"/><rect x="6" y="4.1" width="10" height="1.5" fill="#2c4e67"/><rect x="3.1" y="7" width="1.7" height="1.6"/><rect x="6" y="7" width="10" height="1.6" fill="#2c4e67"/><rect x="3.1" y="10" width="1.7" height="1.4"/><rect x="6" y="10" width="10" height="1.4"/></svg></div><div class="t" style="left:527px">Table</div><div class="t" style="left:640px">Architectural domain</div><div class="ics" style="left:783.8px"><div style="position:absolute;left:4.2px;top:6.2px;width:15px;height:9px"><svg width="15" height="9" viewBox="0 0 15 9" fill="#2b4e6a"><circle cx="7.2" cy="2.4" r="1.65"/><path d="M4 7.9C4.1 6.2 5.3 5.4 7.2 5.4C9.1 5.4 10.3 6.2 10.4 7.9Z"/><circle cx="2.3" cy="4.1" r="1.1"/><path d="M0.2 7.9C0.3 6.8 1 6.3 2.3 6.3C2.8 6.3 3.2 6.4 3.5 6.6C3.2 7 3.1 7.4 3.1 7.9Z"/><circle cx="12.1" cy="4.1" r="1.1"/><path d="M14.2 7.9C14.1 6.8 13.4 6.3 12.1 6.3C11.6 6.3 11.2 6.4 10.9 6.6C11.2 7 11.3 7.4 11.3 7.9Z"/></svg></div></div><div class="t" style="left:812px">All users</div><div class="av" style="left:900px"><i></i></div><div class="dsh" style="left:924px"></div><div class="dsh" style="left:929px"></div><div class="copy" style="left:1047px"><svg width="12" height="14" viewBox="0 0 12 14" fill="none" stroke="#22405a" stroke-width="1.1"><path d="M0.8 10.5V1.3C0.8 1 1 0.8 1.3 0.8H8"/><path d="M3 3.2H7.6L10.6 6.2V12.6C10.6 12.9 10.4 13.1 10.1 13.1H3.5C3.2 13.1 3 12.9 3 12.6Z"/><path d="M7.6 3.2V6.2H10.6" fill="#22405a"/></svg></div><div class="star" style="left:1065px"><svg width="12" height="12" viewBox="0 0 24 24" fill="none" stroke="#22405a" stroke-width="1.7" stroke-linejoin="miter"><path d="M12 2.4 L14.5 9.1 L21.4 9.3 L16 13.6 L17.9 20.5 L12 16.5 L6.1 20.5 L8 13.6 L2.6 9.3 L9.5 9.1 Z"/></svg></div></div>
<div class="row" style="top:264px;background:#ffffff"><div class="cb" style="left:17.4px;top:8.7px"></div><div class="t link" style="left:66px">Beispiel-Liste Capability</div><div class="t" style="left:207px">jede Liste kann angepa<span class="el">…</span></div><div class="ic" style="left:495.5px"><svg width="18" height="16" viewBox="0 0 18 16" fill="#223f55"><rect x="3.1" y="4.1" width="1.7" height="1.5"/><rect x="6" y="4.1" width="10" height="1.5" fill="#2c4e67"/><rect x="3.1" y="7" width="1.7" height="1.6"/><rect x="6" y="7" width="10" height="1.6" fill="#2c4e67"/><rect x="3.1" y="10" width="1.7" height="1.4"/><rect x="6" y="10" width="10" height="1.4"/></svg></div><div class="t" style="left:527px">Table</div><div class="t" style="left:640px">Capability</div><div class="ics" style="left:783.8px"><div style="position:absolute;left:4.2px;top:6.2px;width:15px;height:9px"><svg width="15" height="9" viewBox="0 0 15 9" fill="#2b4e6a"><circle cx="7.2" cy="2.4" r="1.65"/><path d="M4 7.9C4.1 6.2 5.3 5.4 7.2 5.4C9.1 5.4 10.3 6.2 10.4 7.9Z"/><circle cx="2.3" cy="4.1" r="1.1"/><path d="M0.2 7.9C0.3 6.8 1 6.3 2.3 6.3C2.8 6.3 3.2 6.4 3.5 6.6C3.2 7 3.1 7.4 3.1 7.9Z"/><circle cx="12.1" cy="4.1" r="1.1"/><path d="M14.2 7.9C14.1 6.8 13.4 6.3 12.1 6.3C11.6 6.3 11.2 6.4 10.9 6.6C11.2 7 11.3 7.4 11.3 7.9Z"/></svg></div></div><div class="t" style="left:812px">All users</div><div class="av" style="left:900px"><i></i></div><div class="dsh" style="left:924px"></div><div class="dsh" style="left:929px"></div><div class="copy" style="left:1047px"><svg width="12" height="14" viewBox="0 0 12 14" fill="none" stroke="#22405a" stroke-width="1.1"><path d="M0.8 10.5V1.3C0.8 1 1 0.8 1.3 0.8H8"/><path d="M3 3.2H7.6L10.6 6.2V12.6C10.6 12.9 10.4 13.1 10.1 13.1H3.5C3.2 13.1 3 12.9 3 12.6Z"/><path d="M7.6 3.2V6.2H10.6" fill="#22405a"/></svg></div><div class="star" style="left:1065px"><svg width="12" height="12" viewBox="0 0 24 24" fill="none" stroke="#22405a" stroke-width="1.7" stroke-linejoin="miter"><path d="M12 2.4 L14.5 9.1 L21.4 9.3 L16 13.6 L17.9 20.5 L12 16.5 L6.1 20.5 L8 13.6 L2.6 9.3 L9.5 9.1 Z"/></svg></div></div>
<div class="row" style="top:292px;background:#eef0f4"><div class="cb" style="left:17.4px;top:8.7px"></div><div class="t link" style="left:66px">Beispiel-Liste Fachlich<span class="el">…</span></div><div class="t" style="left:207px">jede Liste kann angepa<span class="el">…</span></div><div class="ic" style="left:495.5px"><svg width="18" height="16" viewBox="0 0 18 16" fill="#223f55"><rect x="3.1" y="4.1" width="1.7" height="1.5"/><rect x="6" y="4.1" width="10" height="1.5" fill="#2c4e67"/><rect x="3.1" y="7" width="1.7" height="1.6"/><rect x="6" y="7" width="10" height="1.6" fill="#2c4e67"/><rect x="3.1" y="10" width="1.7" height="1.4"/><rect x="6" y="10" width="10" height="1.4"/></svg></div><div class="t" style="left:527px">Table</div><div class="t" style="left:640px">Business domain</div><div class="ics" style="left:783.8px"><div style="position:absolute;left:4.2px;top:6.2px;width:15px;height:9px"><svg width="15" height="9" viewBox="0 0 15 9" fill="#2b4e6a"><circle cx="7.2" cy="2.4" r="1.65"/><path d="M4 7.9C4.1 6.2 5.3 5.4 7.2 5.4C9.1 5.4 10.3 6.2 10.4 7.9Z"/><circle cx="2.3" cy="4.1" r="1.1"/><path d="M0.2 7.9C0.3 6.8 1 6.3 2.3 6.3C2.8 6.3 3.2 6.4 3.5 6.6C3.2 7 3.1 7.4 3.1 7.9Z"/><circle cx="12.1" cy="4.1" r="1.1"/><path d="M14.2 7.9C14.1 6.8 13.4 6.3 12.1 6.3C11.6 6.3 11.2 6.4 10.9 6.6C11.2 7 11.3 7.4 11.3 7.9Z"/></svg></div></div><div class="t" style="left:812px">All users</div><div class="av" style="left:900px"><i></i></div><div class="dsh" style="left:924px"></div><div class="dsh" style="left:929px"></div><div class="copy" style="left:1047px"><svg width="12" height="14" viewBox="0 0 12 14" fill="none" stroke="#22405a" stroke-width="1.1"><path d="M0.8 10.5V1.3C0.8 1 1 0.8 1.3 0.8H8"/><path d="M3 3.2H7.6L10.6 6.2V12.6C10.6 12.9 10.4 13.1 10.1 13.1H3.5C3.2 13.1 3 12.9 3 12.6Z"/><path d="M7.6 3.2V6.2H10.6" fill="#22405a"/></svg></div><div class="star" style="left:1065px"><svg width="12" height="12" viewBox="0 0 24 24" fill="none" stroke="#22405a" stroke-width="1.7" stroke-linejoin="miter"><path d="M12 2.4 L14.5 9.1 L21.4 9.3 L16 13.6 L17.9 20.5 L12 16.5 L6.1 20.5 L8 13.6 L2.6 9.3 L9.5 9.1 Z"/></svg></div></div>
<div class="row" style="top:320px;background:#ffffff"><div class="cb" style="left:17.4px;top:8.7px"></div><div class="t link" style="left:66px">Beispiel-Liste Fachlich<span class="el">…</span></div><div class="t" style="left:207px">jede Liste kann angepa<span class="el">…</span></div><div class="ic" style="left:495.5px"><svg width="18" height="16" viewBox="0 0 18 16" fill="#223f55"><rect x="3.1" y="4.1" width="1.7" height="1.5"/><rect x="6" y="4.1" width="10" height="1.5" fill="#2c4e67"/><rect x="3.1" y="7" width="1.7" height="1.6"/><rect x="6" y="7" width="10" height="1.6" fill="#2c4e67"/><rect x="3.1" y="10" width="1.7" height="1.4"/><rect x="6" y="10" width="10" height="1.4"/></svg></div><div class="t" style="left:527px">Table</div><div class="t" style="left:640px">Business mapping</div><div class="ics" style="left:783.8px"><div style="position:absolute;left:4.2px;top:6.2px;width:15px;height:9px"><svg width="15" height="9" viewBox="0 0 15 9" fill="#2b4e6a"><circle cx="7.2" cy="2.4" r="1.65"/><path d="M4 7.9C4.1 6.2 5.3 5.4 7.2 5.4C9.1 5.4 10.3 6.2 10.4 7.9Z"/><circle cx="2.3" cy="4.1" r="1.1"/><path d="M0.2 7.9C0.3 6.8 1 6.3 2.3 6.3C2.8 6.3 3.2 6.4 3.5 6.6C3.2 7 3.1 7.4 3.1 7.9Z"/><circle cx="12.1" cy="4.1" r="1.1"/><path d="M14.2 7.9C14.1 6.8 13.4 6.3 12.1 6.3C11.6 6.3 11.2 6.4 10.9 6.6C11.2 7 11.3 7.4 11.3 7.9Z"/></svg></div></div><div class="t" style="left:812px">All users</div><div class="av" style="left:900px"><i></i></div><div class="dsh" style="left:924px"></div><div class="dsh" style="left:929px"></div><div class="copy" style="left:1047px"><svg width="12" height="14" viewBox="0 0 12 14" fill="none" stroke="#22405a" stroke-width="1.1"><path d="M0.8 10.5V1.3C0.8 1 1 0.8 1.3 0.8H8"/><path d="M3 3.2H7.6L10.6 6.2V12.6C10.6 12.9 10.4 13.1 10.1 13.1H3.5C3.2 13.1 3 12.9 3 12.6Z"/><path d="M7.6 3.2V6.2H10.6" fill="#22405a"/></svg></div><div class="star" style="left:1065px"><svg width="12" height="12" viewBox="0 0 24 24" fill="none" stroke="#22405a" stroke-width="1.7" stroke-linejoin="miter"><path d="M12 2.4 L14.5 9.1 L21.4 9.3 L16 13.6 L17.9 20.5 L12 16.5 L6.1 20.5 L8 13.6 L2.6 9.3 L9.5 9.1 Z"/></svg></div></div>
<div class="row" style="top:348px;background:#eef0f4"><div class="cb" style="left:17.4px;top:8.7px"></div><div class="t link" style="left:66px">Beispiel-Liste Geschäft<span class="el">…</span></div><div class="t" style="left:207px">jede Liste kann angepa<span class="el">…</span></div><div class="ic" style="left:495.5px"><svg width="18" height="16" viewBox="0 0 18 16" fill="#223f55"><rect x="3.1" y="4.1" width="1.7" height="1.5"/><rect x="6" y="4.1" width="10" height="1.5" fill="#2c4e67"/><rect x="3.1" y="7" width="1.7" height="1.6"/><rect x="6" y="7" width="10" height="1.6" fill="#2c4e67"/><rect x="3.1" y="10" width="1.7" height="1.4"/><rect x="6" y="10" width="10" height="1.4"/></svg></div><div class="t" style="left:527px">Table</div><div class="t" style="left:640px">Business unit</div><div class="ics" style="left:783.8px"><div style="position:absolute;left:4.2px;top:6.2px;width:15px;height:9px"><svg width="15" height="9" viewBox="0 0 15 9" fill="#2b4e6a"><circle cx="7.2" cy="2.4" r="1.65"/><path d="M4 7.9C4.1 6.2 5.3 5.4 7.2 5.4C9.1 5.4 10.3 6.2 10.4 7.9Z"/><circle cx="2.3" cy="4.1" r="1.1"/><path d="M0.2 7.9C0.3 6.8 1 6.3 2.3 6.3C2.8 6.3 3.2 6.4 3.5 6.6C3.2 7 3.1 7.4 3.1 7.9Z"/><circle cx="12.1" cy="4.1" r="1.1"/><path d="M14.2 7.9C14.1 6.8 13.4 6.3 12.1 6.3C11.6 6.3 11.2 6.4 10.9 6.6C11.2 7 11.3 7.4 11.3 7.9Z"/></svg></div></div><div class="t" style="left:812px">All users</div><div class="av" style="left:900px"><i></i></div><div class="dsh" style="left:924px"></div><div class="dsh" style="left:929px"></div><div class="copy" style="left:1047px"><svg width="12" height="14" viewBox="0 0 12 14" fill="none" stroke="#22405a" stroke-width="1.1"><path d="M0.8 10.5V1.3C0.8 1 1 0.8 1.3 0.8H8"/><path d="M3 3.2H7.6L10.6 6.2V12.6C10.6 12.9 10.4 13.1 10.1 13.1H3.5C3.2 13.1 3 12.9 3 12.6Z"/><path d="M7.6 3.2V6.2H10.6" fill="#22405a"/></svg></div><div class="star" style="left:1065px"><svg width="12" height="12" viewBox="0 0 24 24" fill="none" stroke="#22405a" stroke-width="1.7" stroke-linejoin="miter"><path d="M12 2.4 L14.5 9.1 L21.4 9.3 L16 13.6 L17.9 20.5 L12 16.5 L6.1 20.5 L8 13.6 L2.6 9.3 L9.5 9.1 Z"/></svg></div></div>
<div class="row" style="top:376px;background:#ffffff"><div class="cb" style="left:17.4px;top:8.7px"></div><div class="t link" style="left:66px">Beispiel-Liste Geschäft<span class="el">…</span></div><div class="t" style="left:207px">jede Liste kann angepa<span class="el">…</span></div><div class="ic" style="left:495.5px"><svg width="18" height="16" viewBox="0 0 18 16" fill="#223f55"><rect x="3.1" y="4.1" width="1.7" height="1.5"/><rect x="6" y="4.1" width="10" height="1.5" fill="#2c4e67"/><rect x="3.1" y="7" width="1.7" height="1.6"/><rect x="6" y="7" width="10" height="1.6" fill="#2c4e67"/><rect x="3.1" y="10" width="1.7" height="1.4"/><rect x="6" y="10" width="10" height="1.4"/></svg></div><div class="t" style="left:527px">Table</div><div class="t" style="left:640px">Business object</div><div class="ics" style="left:783.8px"><div style="position:absolute;left:4.2px;top:6.2px;width:15px;height:9px"><svg width="15" height="9" viewBox="0 0 15 9" fill="#2b4e6a"><circle cx="7.2" cy="2.4" r="1.65"/><path d="M4 7.9C4.1 6.2 5.3 5.4 7.2 5.4C9.1 5.4 10.3 6.2 10.4 7.9Z"/><circle cx="2.3" cy="4.1" r="1.1"/><path d="M0.2 7.9C0.3 6.8 1 6.3 2.3 6.3C2.8 6.3 3.2 6.4 3.5 6.6C3.2 7 3.1 7.4 3.1 7.9Z"/><circle cx="12.1" cy="4.1" r="1.1"/><path d="M14.2 7.9C14.1 6.8 13.4 6.3 12.1 6.3C11.6 6.3 11.2 6.4 10.9 6.6C11.2 7 11.3 7.4 11.3 7.9Z"/></svg></div></div><div class="t" style="left:812px">All users</div><div class="av" style="left:900px"><i></i></div><div class="dsh" style="left:924px"></div><div class="dsh" style="left:929px"></div><div class="copy" style="left:1047px"><svg width="12" height="14" viewBox="0 0 12 14" fill="none" stroke="#22405a" stroke-width="1.1"><path d="M0.8 10.5V1.3C0.8 1 1 0.8 1.3 0.8H8"/><path d="M3 3.2H7.6L10.6 6.2V12.6C10.6 12.9 10.4 13.1 10.1 13.1H3.5C3.2 13.1 3 12.9 3 12.6Z"/><path d="M7.6 3.2V6.2H10.6" fill="#22405a"/></svg></div><div class="star" style="left:1065px"><svg width="12" height="12" viewBox="0 0 24 24" fill="none" stroke="#22405a" stroke-width="1.7" stroke-linejoin="miter"><path d="M12 2.4 L14.5 9.1 L21.4 9.3 L16 13.6 L17.9 20.5 L12 16.5 L6.1 20.5 L8 13.6 L2.6 9.3 L9.5 9.1 Z"/></svg></div></div>
<div class="row" style="top:404px;background:#eef0f4"><div class="cb" style="left:17.4px;top:8.7px"></div><div class="t link" style="left:66px">Beispiel-Liste Informati<span class="el">…</span></div><div class="t" style="left:207px">jede Liste kann angepa<span class="el">…</span></div><div class="ic" style="left:495.5px"><svg width="18" height="16" viewBox="0 0 18 16" fill="#223f55"><rect x="3.1" y="4.1" width="1.7" height="1.5"/><rect x="6" y="4.1" width="10" height="1.5" fill="#2c4e67"/><rect x="3.1" y="7" width="1.7" height="1.6"/><rect x="6" y="7" width="10" height="1.6" fill="#2c4e67"/><rect x="3.1" y="10" width="1.7" height="1.4"/><rect x="6" y="10" width="10" height="1.4"/></svg></div><div class="t" style="left:527px">Table</div><div class="t" style="left:640px">Information flow</div><div class="ics" style="left:783.8px"><div style="position:absolute;left:4.2px;top:6.2px;width:15px;height:9px"><svg width="15" height="9" viewBox="0 0 15 9" fill="#2b4e6a"><circle cx="7.2" cy="2.4" r="1.65"/><path d="M4 7.9C4.1 6.2 5.3 5.4 7.2 5.4C9.1 5.4 10.3 6.2 10.4 7.9Z"/><circle cx="2.3" cy="4.1" r="1.1"/><path d="M0.2 7.9C0.3 6.8 1 6.3 2.3 6.3C2.8 6.3 3.2 6.4 3.5 6.6C3.2 7 3.1 7.4 3.1 7.9Z"/><circle cx="12.1" cy="4.1" r="1.1"/><path d="M14.2 7.9C14.1 6.8 13.4 6.3 12.1 6.3C11.6 6.3 11.2 6.4 10.9 6.6C11.2 7 11.3 7.4 11.3 7.9Z"/></svg></div></div><div class="t" style="left:812px">All users</div><div class="av" style="left:900px"><i></i></div><div class="dsh" style="left:924px"></div><div class="dsh" style="left:929px"></div><div class="copy" style="left:1047px"><svg width="12" height="14" viewBox="0 0 12 14" fill="none" stroke="#22405a" stroke-width="1.1"><path d="M0.8 10.5V1.3C0.8 1 1 0.8 1.3 0.8H8"/><path d="M3 3.2H7.6L10.6 6.2V12.6C10.6 12.9 10.4 13.1 10.1 13.1H3.5C3.2 13.1 3 12.9 3 12.6Z"/><path d="M7.6 3.2V6.2H10.6" fill="#22405a"/></svg></div><div class="star" style="left:1065px"><svg width="12" height="12" viewBox="0 0 24 24" fill="none" stroke="#22405a" stroke-width="1.7" stroke-linejoin="miter"><path d="M12 2.4 L14.5 9.1 L21.4 9.3 L16 13.6 L17.9 20.5 L12 16.5 L6.1 20.5 L8 13.6 L2.6 9.3 L9.5 9.1 Z"/></svg></div></div>
<div class="row" style="top:432px;background:#ffffff"><div class="cb" style="left:17.4px;top:8.7px"></div><div class="t link" style="left:66px">Beispiel-Liste Informati<span class="el">…</span></div><div class="t" style="left:207px">jede Liste kann angepa<span class="el">…</span></div><div class="ic" style="left:495.5px"><svg width="18" height="16" viewBox="0 0 18 16" fill="#223f55"><rect x="3.1" y="4.1" width="1.7" height="1.5"/><rect x="6" y="4.1" width="10" height="1.5" fill="#2c4e67"/><rect x="3.1" y="7" width="1.7" height="1.6"/><rect x="6" y="7" width="10" height="1.6" fill="#2c4e67"/><rect x="3.1" y="10" width="1.7" height="1.4"/><rect x="6" y="10" width="10" height="1.4"/></svg></div><div class="t" style="left:527px">Table</div><div class="t" style="left:640px">Information system</div><div class="ics" style="left:783.8px"><div style="position:absolute;left:4.2px;top:6.2px;width:15px;height:9px"><svg width="15" height="9" viewBox="0 0 15 9" fill="#2b4e6a"><circle cx="7.2" cy="2.4" r="1.65"/><path d="M4 7.9C4.1 6.2 5.3 5.4 7.2 5.4C9.1 5.4 10.3 6.2 10.4 7.9Z"/><circle cx="2.3" cy="4.1" r="1.1"/><path d="M0.2 7.9C0.3 6.8 1 6.3 2.3 6.3C2.8 6.3 3.2 6.4 3.5 6.6C3.2 7 3.1 7.4 3.1 7.9Z"/><circle cx="12.1" cy="4.1" r="1.1"/><path d="M14.2 7.9C14.1 6.8 13.4 6.3 12.1 6.3C11.6 6.3 11.2 6.4 10.9 6.6C11.2 7 11.3 7.4 11.3 7.9Z"/></svg></div></div><div class="t" style="left:812px">All users</div><div class="av" style="left:900px"><i></i></div><div class="dsh" style="left:924px"></div><div class="dsh" style="left:929px"></div><div class="copy" style="left:1047px"><svg width="12" height="14" viewBox="0 0 12 14" fill="none" stroke="#22405a" stroke-width="1.1"><path d="M0.8 10.5V1.3C0.8 1 1 0.8 1.3 0.8H8"/><path d="M3 3.2H7.6L10.6 6.2V12.6C10.6 12.9 10.4 13.1 10.1 13.1H3.5C3.2 13.1 3 12.9 3 12.6Z"/><path d="M7.6 3.2V6.2H10.6" fill="#22405a"/></svg></div><div class="star" style="left:1065px"><svg width="12" height="12" viewBox="0 0 24 24" fill="none" stroke="#22405a" stroke-width="1.7" stroke-linejoin="miter"><path d="M12 2.4 L14.5 9.1 L21.4 9.3 L16 13.6 L17.9 20.5 L12 16.5 L6.1 20.5 L8 13.6 L2.6 9.3 L9.5 9.1 Z"/></svg></div></div>
<div class="row" style="top:460px;background:#eef0f4"><div class="cb" style="left:17.4px;top:8.7px"></div><div class="t link" style="left:66px">Beispiel-Liste Infrastru<span class="el">…</span></div><div class="t" style="left:207px">jede Liste kann angepa<span class="el">…</span></div><div class="ic" style="left:495.5px"><svg width="18" height="16" viewBox="0 0 18 16" fill="#223f55"><rect x="3.1" y="4.1" width="1.7" height="1.5"/><rect x="6" y="4.1" width="10" height="1.5" fill="#2c4e67"/><rect x="3.1" y="7" width="1.7" height="1.6"/><rect x="6" y="7" width="10" height="1.6" fill="#2c4e67"/><rect x="3.1" y="10" width="1.7" height="1.4"/><rect x="6" y="10" width="10" height="1.4"/></svg></div><div class="t" style="left:527px">Table</div><div class="t" style="left:640px">Infrastructure element</div><div class="ics" style="left:783.8px"><div style="position:absolute;left:4.2px;top:6.2px;width:15px;height:9px"><svg width="15" height="9" viewBox="0 0 15 9" fill="#2b4e6a"><circle cx="7.2" cy="2.4" r="1.65"/><path d="M4 7.9C4.1 6.2 5.3 5.4 7.2 5.4C9.1 5.4 10.3 6.2 10.4 7.9Z"/><circle cx="2.3" cy="4.1" r="1.1"/><path d="M0.2 7.9C0.3 6.8 1 6.3 2.3 6.3C2.8 6.3 3.2 6.4 3.5 6.6C3.2 7 3.1 7.4 3.1 7.9Z"/><circle cx="12.1" cy="4.1" r="1.1"/><path d="M14.2 7.9C14.1 6.8 13.4 6.3 12.1 6.3C11.6 6.3 11.2 6.4 10.9 6.6C11.2 7 11.3 7.4 11.3 7.9Z"/></svg></div></div><div class="t" style="left:812px">All users</div><div class="av" style="left:900px"><i></i></div><div class="dsh" style="left:924px"></div><div class="dsh" style="left:929px"></div><div class="copy" style="left:1047px"><svg width="12" height="14" viewBox="0 0 12 14" fill="none" stroke="#22405a" stroke-width="1.1"><path d="M0.8 10.5V1.3C0.8 1 1 0.8 1.3 0.8H8"/><path d="M3 3.2H7.6L10.6 6.2V12.6C10.6 12.9 10.4 13.1 10.1 13.1H3.5C3.2 13.1 3 12.9 3 12.6Z"/><path d="M7.6 3.2V6.2H10.6" fill="#22405a"/></svg></div><div class="star" style="left:1065px"><svg width="12" height="12" viewBox="0 0 24 24" fill="none" stroke="#22405a" stroke-width="1.7" stroke-linejoin="miter"><path d="M12 2.4 L14.5 9.1 L21.4 9.3 L16 13.6 L17.9 20.5 L12 16.5 L6.1 20.5 L8 13.6 L2.6 9.3 L9.5 9.1 Z"/></svg></div></div>
<div class="row" style="top:488px;background:#ffffff"><div class="cb" style="left:17.4px;top:8.7px"></div><div class="t link" style="left:66px">Beispiel-Liste IT-Servic<span class="el">…</span></div><div class="t" style="left:207px">jede Liste kann angepa<span class="el">…</span></div><div class="ic" style="left:495.5px"><svg width="18" height="16" viewBox="0 0 18 16" fill="#223f55"><rect x="3.1" y="4.1" width="1.7" height="1.5"/><rect x="6" y="4.1" width="10" height="1.5" fill="#2c4e67"/><rect x="3.1" y="7" width="1.7" height="1.6"/><rect x="6" y="7" width="10" height="1.6" fill="#2c4e67"/><rect x="3.1" y="10" width="1.7" height="1.4"/><rect x="6" y="10" width="10" height="1.4"/></svg></div><div class="t" style="left:527px">Table</div><div class="t" style="left:640px">IT service</div><div class="ics" style="left:783.8px"><div style="position:absolute;left:4.2px;top:6.2px;width:15px;height:9px"><svg width="15" height="9" viewBox="0 0 15 9" fill="#2b4e6a"><circle cx="7.2" cy="2.4" r="1.65"/><path d="M4 7.9C4.1 6.2 5.3 5.4 7.2 5.4C9.1 5.4 10.3 6.2 10.4 7.9Z"/><circle cx="2.3" cy="4.1" r="1.1"/><path d="M0.2 7.9C0.3 6.8 1 6.3 2.3 6.3C2.8 6.3 3.2 6.4 3.5 6.6C3.2 7 3.1 7.4 3.1 7.9Z"/><circle cx="12.1" cy="4.1" r="1.1"/><path d="M14.2 7.9C14.1 6.8 13.4 6.3 12.1 6.3C11.6 6.3 11.2 6.4 10.9 6.6C11.2 7 11.3 7.4 11.3 7.9Z"/></svg></div></div><div class="t" style="left:812px">All users</div><div class="av" style="left:900px"><i></i></div><div class="dsh" style="left:924px"></div><div class="dsh" style="left:929px"></div><div class="copy" style="left:1047px"><svg width="12" height="14" viewBox="0 0 12 14" fill="none" stroke="#22405a" stroke-width="1.1"><path d="M0.8 10.5V1.3C0.8 1 1 0.8 1.3 0.8H8"/><path d="M3 3.2H7.6L10.6 6.2V12.6C10.6 12.9 10.4 13.1 10.1 13.1H3.5C3.2 13.1 3 12.9 3 12.6Z"/><path d="M7.6 3.2V6.2H10.6" fill="#22405a"/></svg></div><div class="star" style="left:1065px"><svg width="12" height="12" viewBox="0 0 24 24" fill="none" stroke="#22405a" stroke-width="1.7" stroke-linejoin="miter"><path d="M12 2.4 L14.5 9.1 L21.4 9.3 L16 13.6 L17.9 20.5 L12 16.5 L6.1 20.5 L8 13.6 L2.6 9.3 L9.5 9.1 Z"/></svg></div></div>
  <div class="row" style="top:516px;background:#eef0f4"></div>
  <div style="position:absolute;left:0;top:0;width:1097px;height:522px;border:1px solid #e3e5e9;border-radius:4px;pointer-events:none"></div>
</div>
<svg class="abs" style="left:270px;top:264px" width="14" height="18" viewBox="0 0 14 18"><path d="M2.1 1.8V12.6L4.6 10.4L6.8 16.2L9.1 15.3L6.9 9.9H10.3Z" fill="#000" stroke="#fff" stroke-width="0.8" stroke-linejoin="round"/></svg>
</div>
</body></html>
